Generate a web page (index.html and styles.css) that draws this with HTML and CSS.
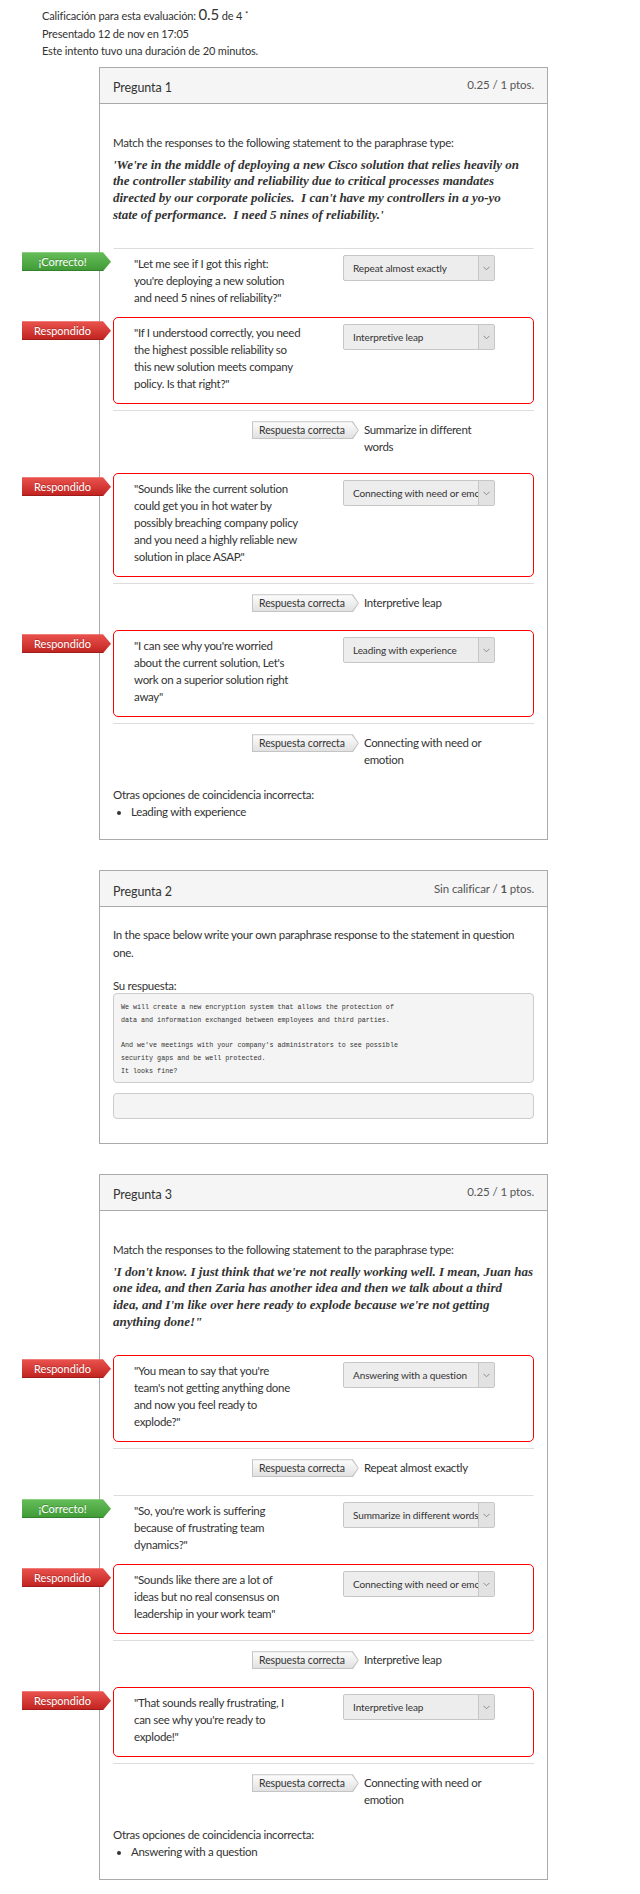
FILE: index.html
```html
<!DOCTYPE html>
<html lang="es">
<head>
<meta charset="utf-8">
<title>Resultados de la evaluación</title>
<link rel="stylesheet" href="styles.css">
</head>
<body>
<div class="summary">
  <div>Calificación para esta evaluación: <span class="summary-score">0.5</span> de 4 <sup class="summary-note">*</sup></div>
  <div>Presentado 12 de nov en 17:05</div>
  <div>Este intento tuvo una duración de 20 minutos.</div>
</div>

<div class="questions">
  <section class="card">
    <header class="card-head">
      <h2 class="card-title">Pregunta 1</h2>
      <span class="card-score">0.25 / 1 ptos.</span>
    </header>
    <div class="card-body">
      <div class="qtext">
        <p class="prompt">Match the responses to the following statement to the paraphrase type:</p>
        <p class="quote">'We're in the middle of deploying a new Cisco solution that relies heavily on<br>the controller stability and reliability due to critical processes mandates<br>directed by our corporate policies.&nbsp; I can't have my controllers in a yo-yo<br>state of performance.&nbsp; I need 5 nines of reliability.'</p>
      </div>

      <div class="answer right">
        <span class="flag flag-ok">¡Correcto!</span>
        <div class="answer-text">"Let me see if I got this right:<br>you're deploying a new solution<br>and need 5 nines of reliability?"</div>
        <div class="select"><span class="select-value">Repeat almost exactly</span><span class="select-arrow"><svg width="7" height="5" viewBox="0 0 7 5"><path d="M0.5 0.8 L3.5 3.8 L6.5 0.8" fill="none" stroke="#8c8c8c" stroke-width="1"/></svg></span></div>
      </div>
      <div class="answer wrong">
        <span class="flag flag-bad">Respondido</span>
        <div class="answer-text">"If I understood correctly, you need<br>the highest possible reliability so<br>this new solution meets company<br>policy. Is that right?"</div>
        <div class="select"><span class="select-value">Interpretive leap</span><span class="select-arrow"><svg width="7" height="5" viewBox="0 0 7 5"><path d="M0.5 0.8 L3.5 3.8 L6.5 0.8" fill="none" stroke="#8c8c8c" stroke-width="1"/></svg></span></div>
      </div>
      <div class="correct-row">
        <span class="tag"><span class="tag-label">Respuesta correcta</span></span>
        <span class="correct-text">Summarize in different words</span>
      </div>
      <div class="answer wrong">
        <span class="flag flag-bad">Respondido</span>
        <div class="answer-text">"Sounds like the current solution<br>could get you in hot water by<br>possibly breaching company policy<br>and you need a highly reliable new<br>solution in place ASAP."</div>
        <div class="select"><span class="select-value">Connecting with need or emotion</span><span class="select-arrow"><svg width="7" height="5" viewBox="0 0 7 5"><path d="M0.5 0.8 L3.5 3.8 L6.5 0.8" fill="none" stroke="#8c8c8c" stroke-width="1"/></svg></span></div>
      </div>
      <div class="correct-row">
        <span class="tag"><span class="tag-label">Respuesta correcta</span></span>
        <span class="correct-text">Interpretive leap</span>
      </div>
      <div class="answer wrong">
        <span class="flag flag-bad">Respondido</span>
        <div class="answer-text">"I can see why you're worried<br>about the current solution, Let's<br>work on a superior solution right<br>away"</div>
        <div class="select"><span class="select-value">Leading with experience</span><span class="select-arrow"><svg width="7" height="5" viewBox="0 0 7 5"><path d="M0.5 0.8 L3.5 3.8 L6.5 0.8" fill="none" stroke="#8c8c8c" stroke-width="1"/></svg></span></div>
      </div>
      <div class="correct-row">
        <span class="tag"><span class="tag-label">Respuesta correcta</span></span>
        <span class="correct-text">Connecting with need or emotion</span>
      </div>

      <div class="others">
        <p>Otras opciones de coincidencia incorrecta:</p>
        <ul><li>Leading with experience</li></ul>
      </div>
    </div>
  </section>

  <section class="card">
    <header class="card-head">
      <h2 class="card-title">Pregunta 2</h2>
      <span class="card-score">Sin calificar / <strong>1</strong> ptos.</span>
    </header>
    <div class="card-body card-body-essay">
      <p class="plain-text">In the space below write your own paraphrase response to the statement in question one.</p>
      <p class="answer-label">Su respuesta:</p>
      <div class="essay">We will create a new encryption system that allows the protection of
data and information exchanged between employees and third parties.

And we've meetings with your company's administrators to see possible
security gaps and be well protected.
It looks fine?</div>
      <div class="essay-empty"></div>
    </div>
  </section>

  <section class="card">
    <header class="card-head">
      <h2 class="card-title">Pregunta 3</h2>
      <span class="card-score">0.25 / 1 ptos.</span>
    </header>
    <div class="card-body">
      <div class="qtext">
        <p class="prompt">Match the responses to the following statement to the paraphrase type:</p>
        <p class="quote">'I don't know. I just think that we're not really working well. I mean, Juan has<br>one idea, and then Zaria has another idea and then we talk about a third<br>idea, and I'm like over here ready to explode because we're not getting<br>anything done!"</p>
      </div>

      <div class="answer wrong">
        <span class="flag flag-bad">Respondido</span>
        <div class="answer-text">"You mean to say that you're<br>team's not getting anything done<br>and now you feel ready to<br>explode?"</div>
        <div class="select"><span class="select-value">Answering with a question</span><span class="select-arrow"><svg width="7" height="5" viewBox="0 0 7 5"><path d="M0.5 0.8 L3.5 3.8 L6.5 0.8" fill="none" stroke="#8c8c8c" stroke-width="1"/></svg></span></div>
      </div>
      <div class="correct-row">
        <span class="tag"><span class="tag-label">Respuesta correcta</span></span>
        <span class="correct-text">Repeat almost exactly</span>
      </div>
      <div class="answer right">
        <span class="flag flag-ok">¡Correcto!</span>
        <div class="answer-text">"So, you're work is suffering<br>because of frustrating team<br>dynamics?"</div>
        <div class="select"><span class="select-value">Summarize in different words</span><span class="select-arrow"><svg width="7" height="5" viewBox="0 0 7 5"><path d="M0.5 0.8 L3.5 3.8 L6.5 0.8" fill="none" stroke="#8c8c8c" stroke-width="1"/></svg></span></div>
      </div>
      <div class="answer wrong">
        <span class="flag flag-bad">Respondido</span>
        <div class="answer-text">"Sounds like there are a lot of<br>ideas but no real consensus on<br>leadership in your work team"</div>
        <div class="select"><span class="select-value">Connecting with need or emotion</span><span class="select-arrow"><svg width="7" height="5" viewBox="0 0 7 5"><path d="M0.5 0.8 L3.5 3.8 L6.5 0.8" fill="none" stroke="#8c8c8c" stroke-width="1"/></svg></span></div>
      </div>
      <div class="correct-row">
        <span class="tag"><span class="tag-label">Respuesta correcta</span></span>
        <span class="correct-text">Interpretive leap</span>
      </div>
      <div class="answer wrong">
        <span class="flag flag-bad">Respondido</span>
        <div class="answer-text">"That sounds really frustrating, I<br>can see why you're ready to<br>explode!"</div>
        <div class="select"><span class="select-value">Interpretive leap</span><span class="select-arrow"><svg width="7" height="5" viewBox="0 0 7 5"><path d="M0.5 0.8 L3.5 3.8 L6.5 0.8" fill="none" stroke="#8c8c8c" stroke-width="1"/></svg></span></div>
      </div>
      <div class="correct-row">
        <span class="tag"><span class="tag-label">Respuesta correcta</span></span>
        <span class="correct-text">Connecting with need or emotion</span>
      </div>

      <div class="others">
        <p>Otras opciones de coincidencia incorrecta:</p>
        <ul><li>Answering with a question</li></ul>
      </div>
    </div>
  </section>
</div>
</body>
</html>
```

FILE: styles.css
```css
* { box-sizing: border-box; }

html, body {
  margin: 0;
  padding: 0;
  background: #fff;
}

body {
  font-family: Lato, "Liberation Sans", Arial, sans-serif;
  font-size: 11.5px;
  letter-spacing: -0.3px;
  color: #333;
}

p { margin: 0; }

/* ---------- summary ---------- */
.summary {
  padding: 7px 0 0 42px;
  font-size: 11px;
  letter-spacing: -0.15px;
  line-height: 17.5px;
}

.summary-score {
  font-size: 15px;
  line-height: 1;
}

.summary-note {
  font-size: 8px;
  line-height: 1;
  vertical-align: 3px;
}

/* ---------- cards ---------- */
.questions {
  width: 449px;
  margin-left: 99px;
  padding-top: 7px;
  display: flex;
  flex-direction: column;
  gap: 30px;
}

.card {
  border: 1px solid #aaa;
}

.card-head {
  height: 36px;
  padding: 0 13px;
  display: flex;
  justify-content: space-between;
  align-items: center;
  background: #f5f5f5;
  border-bottom: 1px solid #aaa;
}

.card-title {
  margin: 0;
  padding-top: 5px;
  font-size: 12.5px;
  font-weight: normal;
  letter-spacing: -0.1px;
}

.card-score {
  padding-bottom: 1px;
  font-size: 11.5px;
  letter-spacing: -0.1px;
  color: #555;
}

.card-body {
  padding: 19px 13px 19px;
}

/* ---------- question text ---------- */
.qtext {
  padding-top: 11px;
  margin-bottom: 25px;
}

.prompt { line-height: 18px; }

.quote {
  margin-top: 5px;
  font-family: "Liberation Serif", "Times New Roman", serif;
  font-weight: bold;
  font-style: italic;
  font-size: 13px;
  line-height: 16.7px;
  letter-spacing: 0;
  white-space: nowrap;
}

/* ---------- matching answers ---------- */
.answer {
  position: relative;
  display: flex;
  align-items: flex-start;
  padding: 6px 20px 11px;
  border: 1px solid transparent;
  line-height: 17px;
}

.answer.right {
  border-top-color: #ddd;
  border-bottom-width: 0;
}

.answer.wrong {
  border-color: #f00;
  border-radius: 5px;
  margin-bottom: 6px;
}

.answer-text {
  flex: 0 0 185px;
  margin-right: 24px;
}

.select {
  flex: none;
  width: 152px;
  height: 26px;
  display: flex;
  overflow: hidden;
  border: 1px solid #c6c6c6;
  border-radius: 2px;
  background: #ededed;
}

.select-value {
  flex: 1;
  min-width: 0;
  overflow: hidden;
  white-space: nowrap;
  padding-left: 9px;
  line-height: 24px;
  font-size: 10px;
  letter-spacing: -0.1px;
  color: #333;
}

.select-arrow {
  flex: 0 0 16px;
  display: flex;
  align-items: center;
  justify-content: center;
  border-left: 1px solid #c6c6c6;
  background: #e2e2e2;
}

.flag {
  position: absolute;
  left: -92px;
  top: 3px;
  width: 89px;
  height: 19px;
  padding-right: 8px;
  color: #fff;
  font-size: 11px;
  letter-spacing: 0;
  line-height: 19px;
  text-align: center;
  text-shadow: 0 -1px 0 rgba(0, 0, 0, 0.2);
  box-shadow: inset 0 -1px 0 rgba(0, 0, 0, 0.18);
  clip-path: polygon(0 0, 81px 0, 100% 50%, 81px 100%, 0 100%);
}

.flag-ok { background: linear-gradient(#66be59, #3f9a36); }
.flag-bad { background: linear-gradient(#eb534f, #c0231f); }

/* ---------- correct answer row ---------- */
.correct-row {
  display: flex;
  align-items: flex-start;
  padding: 10px 0 18px 139px;
  border-top: 1px solid #ddd;
  line-height: 17px;
}

.tag {
  flex: 0 0 auto;
  padding: 1px;
  background: #c4c4c4;
  clip-path: polygon(0 0, calc(100% - 6px) 0, 100% 50%, calc(100% - 6px) 100%, 0 100%);
}

.tag-label {
  display: block;
  height: 16px;
  padding: 0 13px 0 6px;
  line-height: 16px;
  font-size: 10.5px;
  letter-spacing: -0.1px;
  color: #333;
  background: linear-gradient(#fdfdfd, #e1e1e1);
  clip-path: polygon(0 0, calc(100% - 6px) 0, 100% 50%, calc(100% - 6px) 100%, 0 100%);
}

.correct-text {
  width: 125px;
  margin-left: 5px;
}

/* ---------- others ---------- */
.others { line-height: 17px; }

.others ul {
  margin: 0;
  padding-left: 18px;
}

/* ---------- essay question ---------- */
.plain-text {
  max-width: 412px;
  line-height: 18px;
}

.answer-label {
  margin-top: 17px;
  line-height: 14px;
}

.essay {
  padding: 7px 7px 4px;
  border: 1px solid #ccc;
  border-radius: 4px;
  background: #f4f4f4;
  font-family: "Liberation Mono", "DejaVu Sans Mono", monospace;
  font-size: 6.7px;
  letter-spacing: 0;
  line-height: 12.7px;
  white-space: pre-wrap;
  color: #333;
}

.essay-empty {
  height: 26px;
  margin-top: 10px;
  margin-bottom: 5px;
  border: 1px solid #ccc;
  border-radius: 4px;
  background: #f4f4f4;
}
```
